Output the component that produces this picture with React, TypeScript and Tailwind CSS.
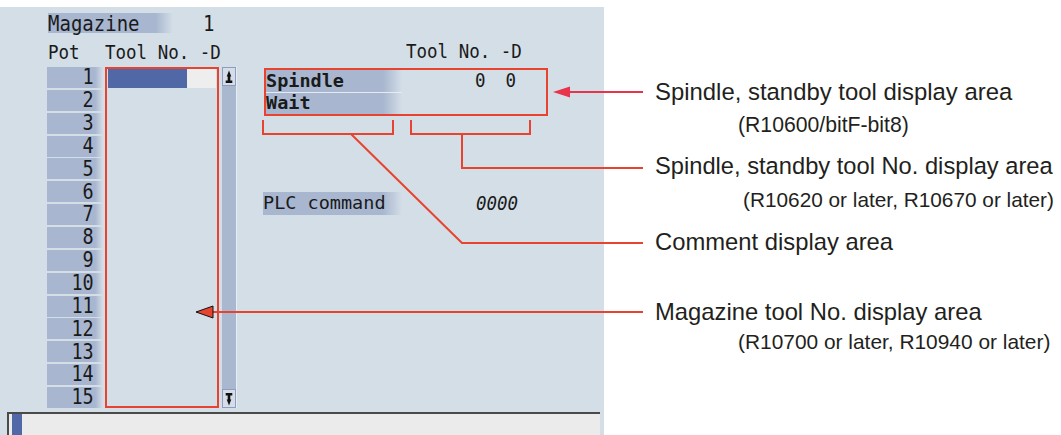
import React from "react";

const mono = "font-['DejaVu_Sans_Mono',monospace]";
const sans = "font-['Liberation_Sans',Arial,sans-serif]";
const labelBg = "bg-[linear-gradient(to_right,#a8b6cf_86%,#d3dee7)]";

function UpIcon() {
  return (
    <svg width="12" height="18" viewBox="0 0 12 18">
      <path d="M6 2.5 L8.3 8.5 H7.3 V12.5 H9.3 V15 H2.7 V12.5 H4.7 V8.5 H3.7 Z" fill="#111" />
    </svg>
  );
}

function DownIcon() {
  return (
    <svg width="12" height="18" viewBox="0 0 12 18">
      <path d="M2.7 3 H9.3 V5.5 H7.3 V9.5 H8.3 L6 15.5 L3.7 9.5 H4.7 V5.5 H2.7 Z" fill="#111" />
    </svg>
  );
}

export default function App() {
  const pots = Array.from({ length: 15 }, (_, i) => i + 1);
  return (
    <div className="relative w-[1061px] h-[435px] bg-white flex overflow-hidden">
      {/* CNC panel */}
      <div className="w-[604px] h-[428px] mt-[7px] bg-[#d3dee7] flex flex-col text-[#1a1a1a]">
        <div className="h-[405px] flex">
          {/* Left block */}
          <div className="ml-[47px] w-[190px] flex flex-col">
            <div className={`mt-[6px] h-[20px] flex items-center ${mono} text-[19px] leading-none`}>
              <div className={`ml-[1px] w-[125px] h-full flex items-center ${labelBg}`}>
                <span className="inline-block scale-y-[1.1]">Magazine</span>
              </div>
              <span className="ml-[30px] inline-block scale-y-[1.1]">1</span>
            </div>
            <div className={`mt-[9px] h-[22px] flex items-center ${mono} text-[17.5px] leading-none whitespace-pre`}>
              <span className="ml-[1px] w-[57px] inline-block scale-y-[1.1] origin-left">Pot</span>
              <span className="inline-block scale-y-[1.1]">Tool No. -D</span>
            </div>
            <div className="mt-[3px] h-[341px] flex">
              <div className="w-[56px] flex flex-col gap-[1.86px]">
                {pots.map((p) => (
                  <div
                    key={p}
                    className={`h-[21px] flex items-center justify-end pr-[9px] ${labelBg} ${mono} text-[18.5px] leading-none`}
                  >
                    <span className="inline-block scale-y-[1.1]">{p}</span>
                  </div>
                ))}
              </div>
              <div className="ml-[2px] w-[115px] h-full border-2 border-[#e8432f] pl-[1px] pr-[1px]">
                <div className="h-[19px] flex">
                  <div className="w-[79px] bg-[#5068a6]" />
                  <div className="flex-1 bg-[#eeeeee]" />
                </div>
              </div>
              <div className="ml-[3px] w-[15px] h-full bg-[#a9b7cf] border-r border-[#e6edf3] flex flex-col justify-between">
                <div className="h-[19px] bg-[#d5dee8] border border-[#8e9cbf] flex items-center justify-center">
                  <UpIcon />
                </div>
                <div className="h-[19px] bg-[#d5dee8] border border-[#8e9cbf] flex items-center justify-center">
                  <DownIcon />
                </div>
              </div>
            </div>
          </div>

          {/* Right block */}
          <div className="ml-[26px] w-[290px] flex flex-col">
            <div className={`mt-[35px] h-[20px] flex items-center ${mono} text-[17.5px] leading-none whitespace-pre`}>
              <span className="ml-[143px] inline-block scale-y-[1.1]">Tool No. -D</span>
            </div>
            <div className="mt-[6px] ml-[1px] w-[284px] h-[48px] border-2 border-[#e8432f] flex flex-col">
              <div className={`h-[22px] flex items-center ${mono} leading-none`}>
                <div className={`w-[136px] h-full flex items-center font-bold text-[18.5px] ${labelBg}`}>Spindle</div>
                <span className="ml-[73px] text-[17.5px] inline-block scale-y-[1.1]">0</span>
                <span className="ml-[20px] text-[17.5px] inline-block scale-y-[1.1]">0</span>
              </div>
              <div className="h-[1px] w-[136px] bg-[#e4ebf2]" />
              <div className={`h-[21px] flex items-center ${mono} leading-none`}>
                <div className={`w-[136px] h-full flex items-center font-bold text-[18.5px] ${labelBg}`}>Wait</div>
              </div>
            </div>
            <div className={`mt-[76px] h-[23px] flex items-center ${mono} leading-none`}>
              <div className={`w-[139px] h-full flex items-center text-[18.5px] ${labelBg}`}>PLC command</div>
              <span className="ml-[74px] text-[17.5px] italic inline-block scale-y-[1.1]">0000</span>
            </div>
          </div>
        </div>

        {/* Bottom input bar */}
        <div className="h-[23px] ml-[7px] w-[593px] border-t-2 border-l-2 border-[#4a4a4a] bg-[#ebebeb] flex">
          <div className="ml-[3px] w-[10px] h-full bg-[#5068a8]" />
        </div>
      </div>

      {/* Annotations */}
      <div className={`pl-[51px] pt-[75px] flex flex-col text-[#231f20] ${sans} whitespace-nowrap`}>
        <div className="h-[33px] leading-[33px] text-[23.9px]">Spindle, standby tool display area</div>
        <div className="h-[33px] leading-[33px] text-[21.2px] ml-[83px]">(R10600/bitF-bit8)</div>
        <div className="mt-[9px] h-[33px] leading-[33px] text-[23.7px]">Spindle, standby tool No. display area</div>
        <div className="h-[33px] leading-[33px] text-[20.8px] ml-[88px]">(R10620 or later, R10670 or later)</div>
        <div className="mt-[9px] h-[33px] leading-[33px] text-[23.8px]">Comment display area</div>
        <div className="mt-[37px] h-[33px] leading-[33px] text-[23.8px]">Magazine tool No. display area</div>
        <div className="h-[28px] leading-[28px] text-[20.9px] ml-[83px]">(R10700 or later, R10940 or later)</div>
      </div>

      {/* Leader lines overlay */}
      <svg className="absolute left-0 top-0 pointer-events-none" width="1061" height="435" viewBox="0 0 1061 435">
        <line x1="567" y1="92" x2="643" y2="92" stroke="#e8334b" strokeWidth="2" />
        <polygon points="553,92 570,86.5 570,97.5" fill="#e8334b" />
        <path d="M263 120 V134 H393 V120" stroke="#e8432f" strokeWidth="2" fill="none" />
        <path d="M411 120 V134 H530 V120" stroke="#e8432f" strokeWidth="2" fill="none" />
        <path d="M462 134 V168 H643" stroke="#e8432f" strokeWidth="2" fill="none" />
        <path d="M351 134 L462 243 H643" stroke="#e8432f" strokeWidth="2" fill="none" />
        <line x1="212" y1="312" x2="643" y2="312" stroke="#e8432f" strokeWidth="2" />
        <polygon points="196,312 213,306 213,318" fill="#e8432f" stroke="#111" strokeWidth="1" />
      </svg>
    </div>
  );
}
